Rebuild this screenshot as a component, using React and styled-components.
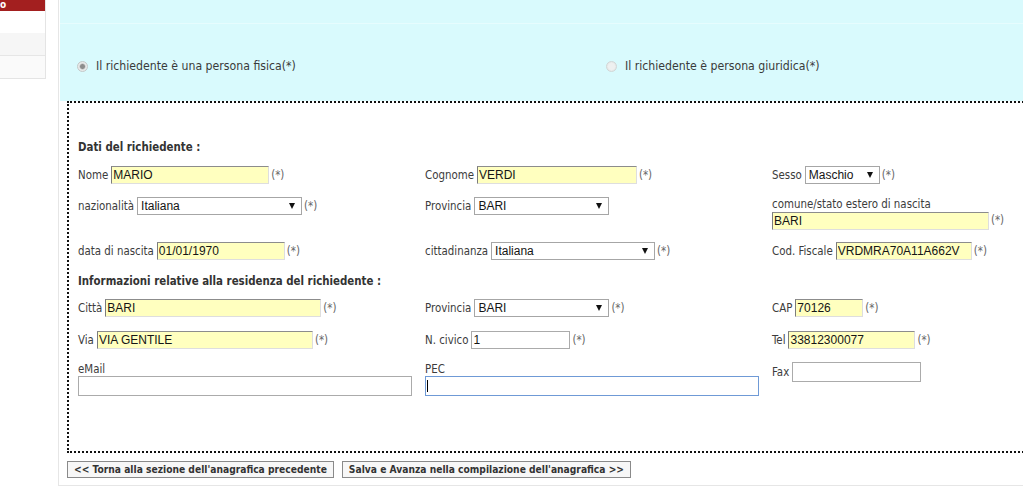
import React from 'react'
import styled, { createGlobalStyle } from 'styled-components'

const GlobalStyle = createGlobalStyle`
	html, body {
		margin: 0;
		padding: 0;
		background: #fff;
		overflow: hidden;
	}
	body {
		font-family: "DejaVu Sans Condensed", "Open Sans", sans-serif;
		font-size: 11.4px;
		color: #3c3c3c;
	}
`

const Page = styled.div`
	display: flex;
	align-items: flex-start;
	width: 1023px;
	height: 493px;
	overflow: hidden;
`

const Sidebar = styled.div`
	flex: none;
	width: 45px;
	border-right: 1px solid #e4e4e4;
	border-bottom: 1px solid #e4e4e4;
`

const SideHeader = styled.div`
	height: 11px;
	background: #a31f1f;
	color: #fff;
	font-weight: bold;
	font-size: 10px;
	line-height: 9px;
	overflow: hidden;
`

const SideRow = styled.div`
	height: 22px;
	background: ${p => p.$bg || '#fff'};
	border-bottom: ${p => (p.$line ? '1px solid #e6e6e6' : 'none')};
`

const Main = styled.div`
	flex: 1;
	min-width: 0;
	margin-left: 12px;
	padding: 0 0 7px 1px;
	border-left: 1px solid #e6e6e6;
	border-bottom: 1px solid #e6e6e6;
`

const Cyan = styled.div`
	background: #d9fafd;
	height: 101px;
`

const TopStrip = styled.div`
	height: 23px;
	border-bottom: 1px solid #e6fcfe;
`

const RadioRow = styled.div`
	display: grid;
	grid-template-columns: 529px 529px;
	align-items: center;
	height: 70px;
	padding: 7px 0 0 17px;
	font-size: 12.2px;
`

const RadioOption = styled.label`
	display: flex;
	align-items: center;
	gap: 8px;
	color: #3a3a3a;
`

const RadioDot = styled.span`
	width: 11px;
	height: 11px;
	border-radius: 50%;
	box-sizing: border-box;
	border: 1px solid ${p => (p.$checked ? '#c4c8c8' : '#d2d6d6')};
	background: ${p =>
		p.$checked
			? 'radial-gradient(circle, #8d8d8d 0 2px, #b9b9b9 2.6px, #e8eaea 3.4px)'
			: 'radial-gradient(circle, #eef0f0 0 3px, #e4e6e6 5px)'};
`

const FormBox = styled.div`
	margin-left: 7px;
	width: 1060px;
	border: 2px dotted #111;
	padding: 37px 0 55px 9px;
`

const Heading = styled.div`
	font-weight: bold;
	line-height: 14px;
	color: #333;
	margin-top: ${p => p.$mt || 0}px;
`

const Row = styled.div`
	display: grid;
	grid-template-columns: repeat(3, 347px);
	align-items: start;
	margin-top: ${p => p.$mt}px;
`

const Field = styled.div`
	display: flex;
	align-items: center;
	gap: 3px;
	line-height: 14px;
	white-space: nowrap;
`

const Stack = styled.div`
	display: flex;
	flex-direction: column;
	line-height: 14px;
	white-space: nowrap;
`

const StackLabel = styled.span`
	margin-bottom: ${p => p.$gap || 0}px;
`

const Required = styled.span`
	color: #666;
	margin-left: -1px;
	align-self: ${p => (p.$bottom ? 'flex-end' : 'auto')};
	margin-bottom: ${p => (p.$bottom ? 3 : 0)}px;
`

const TextInput = styled.input`
	box-sizing: border-box;
	width: ${p => p.$w}px;
	height: ${p => p.$h || 18}px;
	margin: 0;
	padding: 0 1px;
	font-family: "Liberation Sans", Arial, sans-serif;
	font-size: 12px;
	color: #151515;
	outline: none;
	border: 1px solid;
	border-color: ${p =>
		p.$focused ? '#6f9ad6' : p.$filled ? '#8c8c8c #dedede #dedede #7c7c7c' : '#ababab'};
	background: ${p =>
		p.$focused
			? 'linear-gradient(#000, #000) no-repeat 1px 3px / 1px 12px, #fff'
			: p.$filled
				? '#ffffbf'
				: '#fff'};
`

const Select = styled.div`
	box-sizing: border-box;
	width: ${p => p.$w}px;
	height: 18px;
	display: flex;
	align-items: center;
	justify-content: space-between;
	padding: 0 6px 0 3px;
	border: 1px solid #a6a6a6;
	background: #fff;
	font-family: "Liberation Sans", Arial, sans-serif;
	font-size: 12px;
	color: #151515;
`

const Caret = styled.span`
	width: 0;
	height: 0;
	border-left: 3.5px solid transparent;
	border-right: 3.5px solid transparent;
	border-top: 6px solid #111;
`

const Buttons = styled.div`
	display: flex;
	gap: 8px;
	margin: 8px 0 0 7px;
`

const Button = styled.button`
	height: 17px;
	padding: 0 6px;
	margin: 0;
	border: 1px solid #8a8a8a;
	background: #f7f7f7;
	font-family: inherit;
	font-size: 10.2px;
	font-weight: bold;
	color: #333;
	line-height: 15px;
`

const Input = ({ value = '', w, h, filled, focused }) => (
	<TextInput readOnly value={value} $w={w} $h={h} $filled={filled} $focused={focused} />
)

const Dropdown = ({ value, w }) => (
	<Select $w={w}>
		<span>{value}</span>
		<Caret />
	</Select>
)

const App = () => (
	<>
		<GlobalStyle />
		<Page>
			<Sidebar>
				<SideHeader>o</SideHeader>
				<SideRow />
				<SideRow $bg='#f6f6f6' $line />
				<SideRow $bg='#fafafa' />
			</Sidebar>
			<Main>
				<Cyan>
					<TopStrip />
					<RadioRow>
						<RadioOption>
							<RadioDot $checked />
							Il richiedente è una persona fisica(*)
						</RadioOption>
						<RadioOption>
							<RadioDot />
							Il richiedente è persona giuridica(*)
						</RadioOption>
					</RadioRow>
				</Cyan>
				<FormBox>
					<Heading>Dati del richiedente :</Heading>
					<Row $mt={12}>
						<Field>
							Nome <Input value='MARIO' w={158} filled />
							<Required>(*)</Required>
						</Field>
						<Field>
							Cognome <Input value='VERDI' w={160} filled />
							<Required>(*)</Required>
						</Field>
						<Field>
							Sesso <Dropdown value='Maschio' w={75} />
							<Required>(*)</Required>
						</Field>
					</Row>
					<Row $mt={13}>
						<Field>
							nazionalità <Dropdown value='Italiana' w={165} />
							<Required>(*)</Required>
						</Field>
						<Field>
							Provincia <Dropdown value='BARI' w={135} />
						</Field>
						<Field>
							<Stack>
								<StackLabel $gap={1}>comune/stato estero di nascita</StackLabel>
								<Input value='BARI' w={217} filled />
							</Stack>
							<Required $bottom>(*)</Required>
						</Field>
					</Row>
					<Row $mt={12}>
						<Field>
							data di nascita <Input value='01/01/1970' w={128} filled />
							<Required>(*)</Required>
						</Field>
						<Field>
							cittadinanza <Dropdown value='Italiana' w={164} />
							<Required>(*)</Required>
						</Field>
						<Field>
							Cod. Fiscale <Input value='VRDMRA70A11A662V' w={136} filled />
							<Required>(*)</Required>
						</Field>
					</Row>
					<Heading $mt={14}>Informazioni relative alla residenza del richiedente :</Heading>
					<Row $mt={11}>
						<Field>
							Città <Input value='BARI' w={216} filled />
							<Required>(*)</Required>
						</Field>
						<Field>
							Provincia <Dropdown value='BARI' w={135} />
							<Required>(*)</Required>
						</Field>
						<Field>
							CAP <Input value='70126' w={68} filled />
							<Required>(*)</Required>
						</Field>
					</Row>
					<Row $mt={14}>
						<Field>
							Via <Input value='VIA GENTILE' w={216} filled />
							<Required>(*)</Required>
						</Field>
						<Field>
							N. civico <Input value='1' w={99} />
							<Required>(*)</Required>
						</Field>
						<Field>
							Tel <Input value='33812300077' w={127} filled />
							<Required>(*)</Required>
						</Field>
					</Row>
					<Row $mt={13}>
						<Stack>
							<StackLabel>eMail</StackLabel>
							<Input w={334} h={20} />
						</Stack>
						<Stack>
							<StackLabel>PEC</StackLabel>
							<Input w={334} h={20} focused />
						</Stack>
						<Field>
							Fax <Input w={129} h={20} />
						</Field>
					</Row>
				</FormBox>
				<Buttons>
					<Button>&lt;&lt; Torna alla sezione dell'anagrafica precedente</Button>
					<Button>Salva e Avanza nella compilazione dell'anagrafica &gt;&gt;</Button>
				</Buttons>
			</Main>
		</Page>
	</>
)

export default App
